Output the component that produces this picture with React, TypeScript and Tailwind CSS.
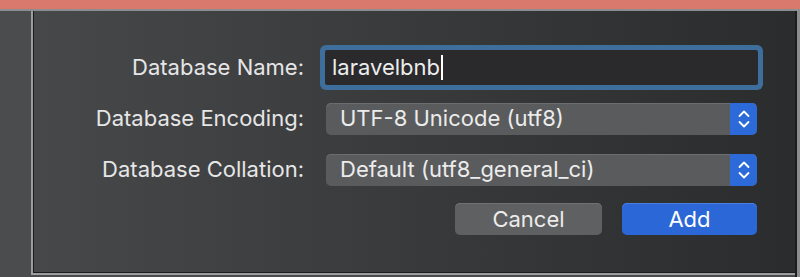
import React from "react";

function Stepper() {
  return (
    <div className="flex h-full w-[27px] items-center justify-center rounded-r-[5px] bg-[#2d6ad9]">
      <svg width="14" height="20" viewBox="0 0 14 20" fill="none">
        <path d="M2.5 7 L7 2.5 L11.5 7" stroke="#ffffff" strokeWidth="1.8" strokeLinecap="round" strokeLinejoin="round" />
        <path d="M2.5 13 L7 17.5 L11.5 13" stroke="#ffffff" strokeWidth="1.8" strokeLinecap="round" strokeLinejoin="round" />
      </svg>
    </div>
  );
}

function Select({ value }: { value: string }) {
  return (
    <div className="mx-px flex h-[32px] items-stretch overflow-hidden rounded-[5px] bg-[#5a5b5d] shadow-[inset_0_1px_0_#6c6d6f]">
      <div className="flex flex-1 items-center pl-[14px] text-[22px] text-[#ececec]">{value}</div>
      <Stepper />
    </div>
  );
}

export default function App() {
  return (
    <div
      className="flex h-[277px] w-[800px] flex-col overflow-hidden bg-[#4a4b4d]"
      style={{ fontFamily: "Inter, 'Liberation Sans', sans-serif" }}
    >
      <div className="h-[9px] bg-[#d9786d]" />
      <div className="flex flex-1 border-t-2 border-[#8c8d8f]">
        <div className="w-[31px] bg-[#4b4c4e]" />
        <div className="flex h-[264px] flex-1 border-l-2 border-b-2 border-[#9c9d9f]">
          <div className="flex flex-1 flex-col border-l border-b border-[#1c1c1e] bg-linear-to-r from-[#47484a] to-[#2b2c2e] pt-[39px]">
            <div className="flex items-center">
              <div className="w-[270px] text-right text-[22px] text-[#e6e6e6]">Database Name:</div>
              <div className="ml-[21px] w-[433px]">
                <div className="flex h-[35px] items-center rounded-[2px] bg-[#2a2a2c] pl-[7px] text-[22px] text-[#ededed] shadow-[0_0_0_5px_#3e6f9c]">
                  <span>laravelbnb</span>
                  <span className="ml-[1px] h-[25px] w-[2px] bg-white" />
                </div>
              </div>
            </div>
            <div className="mt-[17px] flex items-center">
              <div className="w-[270px] text-right text-[22px] text-[#e6e6e6]">Database Encoding:</div>
              <div className="ml-[21px] w-[433px]">
                <Select value="UTF-8 Unicode (utf8)" />
              </div>
            </div>
            <div className="mt-[18px] flex items-center">
              <div className="w-[270px] text-right text-[22px] text-[#e6e6e6]">Database Collation:</div>
              <div className="ml-[21px] w-[433px]">
                <Select value="Default (utf8_general_ci)" />
              </div>
            </div>
            <div className="mt-[17px] flex items-center">
              <div className="w-[270px]" />
              <div className="ml-[21px] flex w-[432px] justify-end gap-[20px]">
                <button className="flex h-[32px] w-[147px] items-center justify-center rounded-[5px] bg-[#5f6062] text-[22px] text-[#ececec] shadow-[inset_0_1px_0_#707173]">
                  Cancel
                </button>
                <button className="flex h-[32px] w-[135px] items-center justify-center rounded-[5px] bg-[#2b67d7] text-[22px] text-white shadow-[inset_0_1px_0_#4a7fe0]">
                  Add
                </button>
              </div>
            </div>
          </div>
        </div>
        <div className="flex w-[5px]">
          <div className="w-[2px] bg-[#1c1c1e]" />
          <div className="flex-1 bg-[#8c8d8f]" />
        </div>
      </div>
    </div>
  );
}
